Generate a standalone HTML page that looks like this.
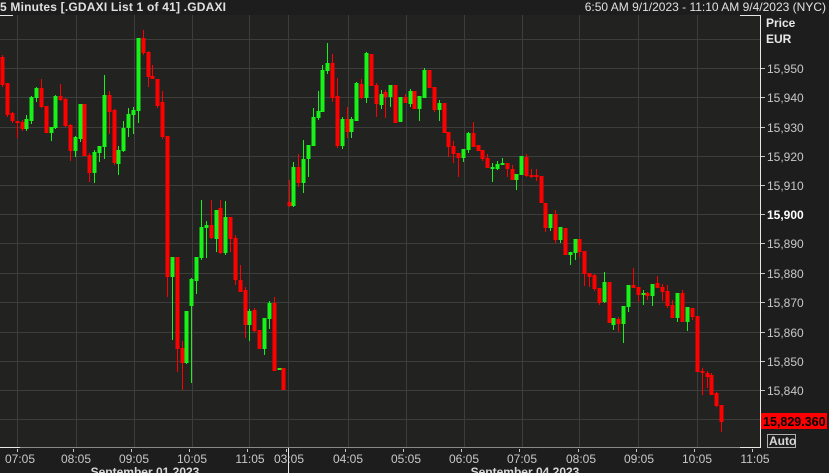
<!DOCTYPE html>
<html><head><meta charset="utf-8"><style>
html,body{margin:0;padding:0;background:#1d1d1d;width:829px;height:473px;overflow:hidden;font-family:"Liberation Sans",sans-serif;}
svg{position:absolute;left:0;top:0}
</style></head><body>
<svg id="s" width="829" height="473" xmlns="http://www.w3.org/2000/svg" font-family="Liberation Sans, sans-serif">
<rect x="0" y="15" width="760" height="433" fill="#222321"/>
<g id="grid" stroke="#3d3e3c" stroke-width="1"></g>
<g id="c"></g>
<line x1="760.5" y1="15" x2="760.5" y2="448" stroke="#e8e8e8"/>
<line x1="0" y1="15.5" x2="13" y2="15.5" stroke="#e8e8e8"/>
<line x1="740" y1="15.5" x2="760" y2="15.5" stroke="#e8e8e8"/>
<line x1="0" y1="447.5" x2="760" y2="447.5" stroke="#8a8a8a"/>
<line x1="0" y1="447.5" x2="20" y2="447.5" stroke="#e8e8e8"/>
<line x1="740" y1="447.5" x2="760" y2="447.5" stroke="#e8e8e8"/>
<line x1="288.5" y1="448" x2="288.5" y2="473" stroke="#e8e8e8"/>
<text x="0" y="11" font-size="12" fill="#e0e0e0" font-weight="bold" textLength="226">5 Minutes [.GDAXI List 1 of 41] .GDAXI</text>
<text x="826" y="11" font-size="12" fill="#e0e0e0" text-anchor="end">6:50 AM 9/1/2023 - 11:10 AM 9/4/2023 (NYC)</text>
<text x="766" y="27" font-size="12" fill="#e8e8e8" font-weight="bold">Price</text>
<text x="766" y="43" font-size="12" fill="#e8e8e8" font-weight="bold">EUR</text>
<g id="pl" font-size="12" fill="#c8c8c8"></g>
<rect x="761" y="413" width="66" height="16" fill="#ff0000"/>
<text x="763" y="426" font-size="12.5" font-weight="bold" fill="#000">15,829.360</text>
<rect x="767.5" y="434.5" width="28" height="13" fill="none" stroke="#b0b0b0"/>
<text x="769" y="445" font-size="12" font-weight="bold" fill="#d8d8d8">Auto</text>
<g id="tl" font-size="12" fill="#c8c8c8" text-anchor="middle"></g>
<text x="145" y="476" font-size="12" font-weight="bold" fill="#d8d8d8" text-anchor="middle">September 01 2023</text>
<text x="525" y="476" font-size="12" font-weight="bold" fill="#d8d8d8" text-anchor="middle">September 04 2023</text>
</svg>
<script>
var NS="http://www.w3.org/2000/svg";
function el(p,t,a,txt){var e=document.createElementNS(NS,t);for(var k in a)e.setAttribute(k,a[k]);if(txt)e.textContent=txt;document.getElementById(p).appendChild(e);return e;}
var vx=[17,76,134,192,249,288,348,406,464,522,579,638,697];
vx.forEach(function(x){el("grid","line",{x1:x+.5,y1:15,x2:x+.5,y2:447});});
var hy=[39,68,97,127,156,185,214,243,273,302,332,361,390,419];
hy.forEach(function(y){el("grid","line",{x1:0,y1:y+.5,x2:760,y2:y+.5});});
var prices=["15,950","15,940","15,930","15,920","15,910","15,900","15,890","15,880","15,870","15,860","15,850","15,840"];
prices.forEach(function(p,i){var y=hy[i+1];el("grid","line",{x1:761,y1:y+.5,x2:765,y2:y+.5,stroke:"#c8c8c8"});
var t=el("pl","text",{x:767,y:y+5},p);if(p=="15,900"){t.setAttribute("font-weight","bold");t.setAttribute("fill","#fff");}});
var tl=[[20,"07:05"],[76,"08:05"],[134,"09:05"],[192,"10:05"],[250,"11:05"],[289,"03:05"],[348,"04:05"],[406,"05:05"],[464,"06:05"],[522,"07:05"],[581,"08:05"],[639,"09:05"],[697,"10:05"],[755,"11:05"]];
tl.forEach(function(a){el("tl","line",{x1:a[0]-2.5,y1:449,x2:a[0]-2.5,y2:452,stroke:"#c8c8c8"});el("tl","text",{x:a[0],y:463},a[1]);});
// x, open(body top/bottom), close, wickTop, wickBot, color
var C=[
[2,57,85,55,87,'r'],[7,83,115,83,117,'r'],[12,113,121,112,123,'r'],[17,121,123,121,138,'r'],[22,122,129,120,131,'r'],[26,119,129,115,131,'g'],[31,97,121,96,124,'g'],[36,88,98,87,102,'g'],[41,88,107,79,108,'r'],[46,106,133,106,133,'r'],[51,127,133,127,141,'g'],[55,96,128,95,129,'g'],[60,96,100,84,101,'r'],[65,99,126,98,127,'r'],[70,125,151,124,161,'r'],[75,137,151,136,157,'g'],[80,104,139,104,142,'g'],[84,104,156,104,156,'r'],[89,155,173,153,182,'r'],[94,152,173,150,183,'g'],[99,146,153,146,162,'g'],[104,95,147,75,159,'g'],[109,95,112,91,134,'r'],[114,110,163,109,165,'r'],[118,150,164,146,175,'g'],[123,128,151,121,152,'g'],[128,114,128,108,137,'g'],[133,110,115,107,134,'g'],[138,38,111,38,123,'g'],[143,38,53,30,55,'r'],[148,52,77,51,87,'r'],[152,76,79,65,79,'r'],[157,79,106,79,108,'r'],[162,102,137,91,139,'r'],[167,136,277,136,297,'r'],[172,257,277,257,340,'g'],[177,257,349,257,372,'r'],[182,348,363,341,390,'r'],[186,311,363,311,364,'g'],[191,279,306,278,383,'g'],[196,257,281,257,294,'g'],[201,227,258,200,260,'g'],[206,225,228,221,258,'g'],[211,225,238,200,239,'r'],[216,210,239,210,252,'g'],[220,208,253,200,254,'r'],[225,217,253,201,255,'g'],[230,217,239,217,252,'r'],[235,238,280,235,285,'r'],[240,280,292,265,292,'r'],[245,290,325,287,338,'r'],[249,311,325,309,341,'g'],[254,310,331,308,332,'r'],[259,330,349,330,349,'r'],[264,318,349,318,355,'g'],[269,303,319,301,329,'g'],[274,303,371,297,371,'r'],[279,368,369,368,369,'g'],[283,368,390,368,390,'r'],
[289,202,206,180,207,'r'],[293,167,206,162,207,'g'],[298,167,183,154,187,'r'],[303,159,183,140,193,'g'],[308,145,159,145,177,'g'],[313,117,146,108,146,'g'],[318,111,118,91,120,'g'],[322,70,112,65,112,'g'],[327,63,71,43,74,'g'],[332,63,98,54,102,'r'],[337,96,146,78,148,'r'],[342,119,146,117,149,'g'],[347,119,132,107,138,'r'],[351,119,132,117,138,'g'],[356,83,121,82,121,'g'],[361,84,98,79,99,'r'],[366,53,98,52,103,'g'],[371,54,86,54,86,'r'],[376,85,104,83,117,'r'],[381,94,105,90,109,'g'],[385,92,97,90,118,'r'],[390,85,97,85,107,'g'],[395,85,123,85,123,'r'],[400,97,122,97,122,'g'],[405,97,103,94,103,'r'],[410,91,104,89,107,'g'],[414,91,109,91,109,'r'],[419,96,109,96,121,'g'],[424,70,98,68,98,'g'],[429,70,88,70,88,'r'],[434,87,110,87,112,'r'],[439,103,110,100,121,'g'],[444,103,133,103,133,'r'],[448,132,147,132,157,'r'],[453,146,154,141,163,'r'],[458,153,158,153,177,'r'],[463,149,158,149,162,'g'],[468,133,150,132,153,'g'],[473,133,147,122,147,'r'],[478,145,151,145,151,'r'],[482,150,159,150,161,'r'],[487,158,168,154,168,'r'],[492,167,168,163,182,'g'],[497,164,169,161,170,'g'],[502,163,164,158,165,'g'],[507,163,169,163,177,'r'],[512,169,180,165,180,'r'],[516,174,180,174,190,'g'],[521,156,175,156,175,'g'],[526,157,176,154,177,'r'],[531,175,177,169,178,'r'],[536,175,177,169,181,'r'],[541,176,203,176,203,'r'],[545,203,228,203,232,'r'],[550,214,228,214,231,'g'],[555,214,240,210,243,'r'],[560,227,240,227,243,'g'],[565,228,255,228,255,'r'],[570,252,255,252,265,'g'],[575,239,253,239,260,'g'],[579,239,252,239,257,'r'],[584,251,274,251,286,'r'],[589,273,277,273,287,'r'],[594,275,289,274,291,'r'],[599,288,303,288,305,'r'],[604,282,302,272,303,'g'],[609,282,323,282,323,'r'],[613,318,325,318,330,'g'],[618,319,324,317,332,'r'],[623,306,324,306,343,'g'],[628,285,307,285,312,'g'],[633,285,288,268,288,'r'],[638,287,295,287,302,'r'],[643,293,295,290,305,'g'],[647,293,296,292,300,'r'],[652,284,296,284,306,'g'],[657,283,288,276,288,'r'],[662,287,292,284,301,'r'],[667,291,306,285,308,'r'],[672,305,318,300,318,'r'],[677,293,318,293,322,'g'],[682,293,322,290,322,'r'],[687,307,322,307,331,'g'],[692,308,317,308,320,'r'],[697,316,372,316,372,'r'],[702,371,373,368,395,'r'],[707,373,377,371,388,'r'],[711,375,395,373,395,'r'],[716,393,406,392,407,'r'],[721,405,422,405,432,'r']];
C.forEach(function(c){var col=c[5]=='r'?'#ff0000':'#17f317';
el("c","rect",{x:c[0],y:c[3],width:1,height:c[4]-c[3],fill:col});
var h=Math.max(2,c[2]-c[1]);el("c","rect",{x:c[0]-1.5,y:c[1],width:4,height:h,fill:col});});
</script>
</body></html>
